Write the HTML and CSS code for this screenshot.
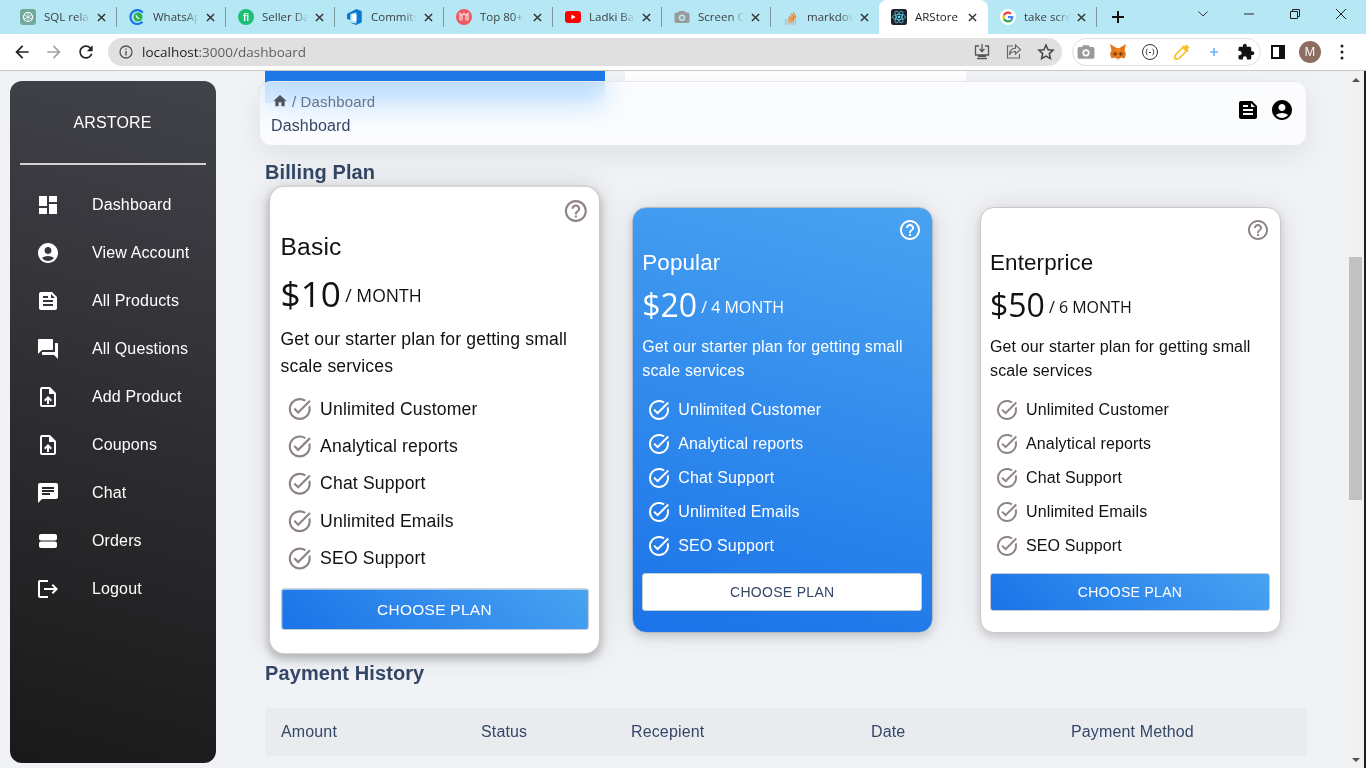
FILE: index.html
```html
<!DOCTYPE html>
<html lang="en">
<head>
<meta charset="utf-8">
<title>ARStore</title>
<link rel="stylesheet" href="styles.css">
</head>
<body>
<svg class="defs" aria-hidden="true">
  <symbol id="i-close" viewBox="0 0 10 10"><path d="M1 1l8 8M9 1L1 9" fill="none" stroke="currentColor" stroke-width="1.6"/></symbol>
  <symbol id="i-dashboard" viewBox="0 0 24 24"><path d="M3 13h8V3H3v10zm0 8h8v-6H3v6zm10 0h8V11h-8v10zm0-18v6h8V3h-8z"/></symbol>
  <symbol id="i-account" viewBox="0 0 24 24"><path d="M12 2C6.48 2 2 6.48 2 12s4.48 10 10 10 10-4.48 10-10S17.52 2 12 2zm0 4c1.93 0 3.5 1.57 3.5 3.5S13.93 13 12 13s-3.5-1.57-3.5-3.5S10.07 6 12 6zm0 14c-2.03 0-4.43-.82-6.14-2.88C7.55 15.8 9.68 15 12 15s4.45.8 6.14 2.12C16.43 19.18 14.03 20 12 20z"/></symbol>
  <symbol id="i-feed" viewBox="0 0 24 24"><path d="M16 3H5c-1.1 0-2 .9-2 2v14c0 1.1.9 2 2 2h14c1.1 0 2-.9 2-2V8l-5-5zM7 7h5v2H7V7zm10 10H7v-2h10v2zm0-4H7v-2h10v2zm-2-4V5l4 4h-4z"/></symbol>
  <symbol id="i-forum" viewBox="0 0 24 24"><path d="M21 6h-2v9H6v2c0 .55.45 1 1 1h11l4 4V7c0-.55-.45-1-1-1zm-4 6V3c0-.55-.45-1-1-1H3c-.55 0-1 .45-1 1v14l4-4h10c.55 0 1-.45 1-1z"/></symbol>
  <symbol id="i-upload" viewBox="0 0 24 24"><path d="M14 2H6c-1.1 0-1.99.9-1.99 2L4 20c0 1.1.89 2 1.99 2H18c1.1 0 2-.9 2-2V8l-6-6zm4 18H6V4h7v5h5v11zM8 15.01l1.41 1.41L11 14.84V19h2v-4.16l1.59 1.59L16 15.01 12.01 11 8 15.01z"/></symbol>
  <symbol id="i-chat" viewBox="0 0 24 24"><path d="M20 2H4c-1.1 0-1.99.9-1.99 2L2 22l4-4h14c1.1 0 2-.9 2-2V4c0-1.1-.9-2-2-2zM6 9h12v2H6V9zm8 5H6v-2h8v2zm4-6H6V6h12v2z"/></symbol>
  <symbol id="i-stream" viewBox="0 0 24 24"><path d="M3 17v-2.500c0-1.100.9-2 2-2h14c1.100 0 2 .9 2 2V17c0 1.100-.9 2-2 2H5c-1.100 0-2-.9-2-2zM3 7v2.500c0 1.100.9 2 2 2h14c1.100 0 2-.9 2-2V7c0-1.100-.9-2-2-2H5c-1.100 0-2 .9-2 2z"/></symbol>
  <symbol id="i-logout" viewBox="0 0 24 24"><path d="M17 7l-1.41 1.41L18.17 11H8v2h10.17l-2.58 2.58L17 17l5-5zM4 5h8V3H4c-1.1 0-2 .9-2 2v14c0 1.1.9 2 2 2h8v-2H4V5z"/></symbol>
  <symbol id="i-home" viewBox="0 0 24 24"><path d="M10 20v-6h4v6h5v-8h3L12 3 2 12h3v8z"/></symbol>
  <symbol id="i-help" viewBox="0 0 24 24"><path d="M11 18h2v-2h-2v2zm1-16C6.48 2 2 6.48 2 12s4.48 10 10 10 10-4.48 10-10S17.52 2 12 2zm0 18c-4.41 0-8-3.59-8-8s3.59-8 8-8 8 3.59 8 8-3.59 8-8 8zm0-14c-2.21 0-4 1.79-4 4h2c0-1.1.9-2 2-2s2 .9 2 2c0 2-3 1.75-3 5h2c0-2.25 3-2.5 3-5 0-2.21-1.79-4-4-4z"/></symbol>
  <symbol id="i-task" viewBox="0 0 24 24"><path d="M22 5.18L10.59 16.6l-4.24-4.24 1.41-1.41 2.83 2.83 10-10L22 5.18zm-2.21 5.04c.13.57.21 1.17.21 1.78 0 4.42-3.58 8-8 8s-8-3.58-8-8 3.58-8 8-8c1.58 0 3.04.46 4.28 1.21l1.44-1.44C16.1 2.67 14.13 2 12 2 6.48 2 2 6.48 2 12s4.48 10 10 10 10-4.48 10-10c0-1.19-.22-2.33-.6-3.39l-1.61 1.61z"/></symbol>
  <symbol id="i-camera" viewBox="0 0 16 16"><path d="M5.500 2L4.400 3.500H2A1.500 1.500 0 0 0 .5 5v7.500A1.500 1.500 0 0 0 2 14h12a1.500 1.500 0 0 0 1.500-1.500V5A1.500 1.500 0 0 0 14 3.500h-2.400L10.500 2zM8 5.500a3.200 3.200 0 1 1 0 6.400 3.200 3.200 0 0 1 0-6.400zM8 7a1.700 1.700 0 1 0 0 3.400A1.700 1.700 0 0 0 8 7z"/></symbol>
</svg>

<header class="browser">
  <div class="tabstrip">
    <div class="tab sep">
      <svg class="fav" viewBox="0 0 16 16"><rect width="16" height="16" rx="3" fill="#74aa9c"/><circle cx="8" cy="8" r="4.500" fill="none" stroke="#fff" stroke-width="1.200"/><path d="M8 3.500v9M4 5.700l8 4.600M12 5.700l-8 4.600" stroke="#fff" stroke-width=".7"/></svg>
      <span class="tab-title">SQL relation</span><svg class="tab-x"><use href="#i-close"/></svg>
    </div>
    <div class="tab sep">
      <svg class="fav" viewBox="0 0 16 16"><path d="M13.500 12.800A7 7 0 1 1 13.800 3.600" fill="none" stroke="#1a73e8" stroke-width="2.200"/><circle cx="9" cy="8" r="4.500" fill="#25b454"/><path d="M7.200 6.300c.2 2 1.200 3 3.200 3.400" fill="none" stroke="#fff" stroke-width="1.300"/></svg>
      <span class="tab-title">WhatsApp</span><svg class="tab-x"><use href="#i-close"/></svg>
    </div>
    <div class="tab sep">
      <svg class="fav" viewBox="0 0 16 16"><circle cx="8" cy="8" r="8" fill="#1dbf73"/><text x="8" y="11.500" class="fav-text">fi</text></svg>
      <span class="tab-title">Seller Dashboard</span><svg class="tab-x"><use href="#i-close"/></svg>
    </div>
    <div class="tab sep">
      <svg class="fav" viewBox="0 0 16 16"><path d="M0 5l2-1.200L9.500 0 14.500 2v11.500L9 16 3 13.500l6.500 1V3.500L3.500 5v6L0 10z" fill="#0b78d0"/><path d="M9.500 2.500L14.500 3v9.500l-5 1z" fill="#0b78d0"/><path d="M3.500 5l6-1.500v2L5.500 6.300v4.200l-2 .5z" fill="#fff" opacity=".25"/><rect x="5.500" y="5.600" width="4" height="6.500" fill="#fff"/></svg>
      <span class="tab-title">Commits - Azure</span><svg class="tab-x"><use href="#i-close"/></svg>
    </div>
    <div class="tab sep">
      <svg class="fav" viewBox="0 0 16 16"><circle cx="8" cy="8" r="8" fill="#ec5b62"/><path d="M4 11.500V4.500l2 2 2-2 2 2 2-2v7M6 6.500v5M10 6.500v5" fill="none" stroke="#fbd4d6" stroke-width="1.300"/></svg>
      <span class="tab-title">Top 80+ SQL</span><svg class="tab-x"><use href="#i-close"/></svg>
    </div>
    <div class="tab sep">
      <svg class="fav" viewBox="0 0 16 16"><rect y="2" width="16" height="12" rx="3.200" fill="#f00"/><path d="M6.400 5.600L10.600 8l-4.200 2.400z" fill="#fff"/></svg>
      <span class="tab-title">Ladki Badi</span><svg class="tab-x"><use href="#i-close"/></svg>
    </div>
    <div class="tab sep">
      <svg class="fav fav-gray"><use href="#i-camera"/></svg>
      <span class="tab-title">Screen Capture</span><svg class="tab-x"><use href="#i-close"/></svg>
    </div>
    <div class="tab tab-last">
      <svg class="fav" viewBox="0 0 16 16"><path d="M2.500 10v5h10v-5" fill="none" stroke="#bcbbbb" stroke-width="1.200"/><path d="M4.500 13h6.500M4.700 10.900l6.300.6M5.200 8.800l6.100 1.700M6.200 6.700l5.500 3M7.900 4.700l4.400 4.300M10 3l3.200 5.300" fill="none" stroke="#f48024" stroke-width="1.200"/></svg>
      <span class="tab-title">markdown</span><svg class="tab-x"><use href="#i-close"/></svg>
    </div>
    <div class="tab tab-active">
      <svg class="fav" viewBox="0 0 16 16"><rect width="16" height="16" rx="2.500" fill="#20232a"/><g fill="none" stroke="#61dafb" stroke-width=".7"><ellipse cx="8" cy="8" rx="6.500" ry="2.600"/><ellipse cx="8" cy="8" rx="6.500" ry="2.600" transform="rotate(60 8 8)"/><ellipse cx="8" cy="8" rx="6.500" ry="2.600" transform="rotate(120 8 8)"/></g><circle cx="8" cy="8" r="1.300" fill="#61dafb"/></svg>
      <span class="tab-title tab-title-full">ARStore</span><svg class="tab-x"><use href="#i-close"/></svg>
    </div>
    <div class="tab sep">
      <svg class="fav" viewBox="0 0 16 16"><circle cx="8" cy="8" r="8" fill="#fff"/><path d="M13.300 8.200c0-.4 0-.8-.1-1.200H8v2.200h3c-.1.700-.5 1.300-1.100 1.700l1.700 1.400c1.100-1 1.700-2.400 1.700-4.100z" fill="#4285f4"/><path d="M8 13.500c1.500 0 2.700-.5 3.600-1.300l-1.700-1.400c-.5.300-1.100.5-1.900.5-1.400 0-2.600-1-3.100-2.300L3.100 10.400c.9 1.800 2.800 3.100 4.900 3.100z" fill="#34a853"/><path d="M4.900 9c-.2-.7-.2-1.400 0-2.100L3.100 5.500c-.8 1.500-.8 3.400 0 4.900z" fill="#fbbc05"/><path d="M8 4.700c.8 0 1.500.3 2.100.8l1.500-1.500C10.700 3 9.400 2.500 8 2.500c-2.100 0-4 1.300-4.900 3l1.800 1.400C5.400 5.600 6.600 4.700 8 4.700z" fill="#ea4335"/></svg>
      <span class="tab-title">take screenshot</span><svg class="tab-x"><use href="#i-close"/></svg>
    </div>
    <div class="newtab"><svg viewBox="0 0 12 12" width="12" height="12"><path d="M6 0v12M0 6h12" stroke="#111" stroke-width="2"/></svg></div>
    <div class="winctrls">
      <div class="winctrl"><svg viewBox="0 0 10 6" width="10" height="6"><path d="M.5.500L5 5 9.500.500" fill="none" stroke="#333" stroke-width="1"/></svg></div>
      <div class="winctrl"><svg viewBox="0 0 10 2" width="10" height="2"><path d="M0 1h10" stroke="#222" stroke-width="1"/></svg></div>
      <div class="winctrl"><svg viewBox="0 0 10 10" width="10" height="10"><path d="M.5 2.500h7v7h-7zM2.500 2.500v-2h7v7h-2" fill="none" stroke="#222" stroke-width="1"/></svg></div>
      <div class="winctrl"><svg viewBox="0 0 10 10" width="10" height="10"><path d="M0 0l10 10M10 0L0 10" stroke="#222" stroke-width="1"/></svg></div>
    </div>
  </div>
  <div class="toolbar">
    <svg class="tool-btn" viewBox="0 0 24 24"><path d="M20 11H7.830l5.590-5.590L12 4l-8 8 8 8 1.410-1.410L7.830 13H20v-2z"/></svg>
    <svg class="tool-btn tool-dim" viewBox="0 0 24 24"><path d="M4 11h12.170l-5.590-5.590L12 4l8 8-8 8-1.410-1.410L16.170 13H4v-2z"/></svg>
    <svg class="tool-btn" viewBox="0 0 24 24"><path d="M17.650 6.350C16.200 4.900 14.210 4 12 4c-4.420 0-7.990 3.580-7.990 8s3.570 8 7.990 8c3.730 0 6.840-2.550 7.730-6h-2.080c-.82 2.330-3.040 4-5.650 4-3.310 0-6-2.690-6-6s2.690-6 6-6c1.660 0 3.140.69 4.220 1.780L13 11h7V4l-2.350 2.350z"/></svg>
    <div class="omnibox">
      <svg class="omni-info" viewBox="0 0 16 16"><circle cx="8" cy="8" r="6" fill="none" stroke="#555" stroke-width="1.300"/><path d="M8 7v4.500M8 4.500v1.300" stroke="#555" stroke-width="1.400"/></svg>
      <span class="url"><span class="url-host">localhost</span>:3000/dashboard</span>
      <div class="omni-actions">
        <svg viewBox="0 0 18 18" class="omni-ic"><path d="M6 3H2.500v9h13V3H12M9 1v7M6.500 6L9 8.500 11.500 6M4 15.500h10" fill="none" stroke="#555" stroke-width="1.300"/><path d="M5 12h8v2H5z" fill="#555"/></svg>
        <svg viewBox="0 0 18 18" class="omni-ic"><path d="M8 3H2.500v12h12v-4M10.500 2l5 4.500-5 4.500V8.500C7.500 8.500 5.500 9.500 4.500 12c0-4 2.500-6.500 6-6.800z" fill="none" stroke="#666" stroke-width="1.200"/></svg>
        <svg viewBox="0 0 18 18" class="omni-ic"><path d="M9 2l2.100 4.700 5 .5-3.800 3.400 1.100 5L9 13l-4.400 2.600 1.100-5L1.900 7.200l5-.5z" fill="none" stroke="#444" stroke-width="1.500"/></svg>
      </div>
    </div>
    <div class="extensions">
      <svg class="ext fav-gray"><use href="#i-camera"/></svg>
      <svg class="ext" viewBox="0 0 18 18"><path d="M1 1l6.500 4h3L17 1l-1.500 6 1.500 4-1.500 4.500-3.500-1-2 1.500h-2L6 14.500l-3.500 1L1 11l1.500-4z" fill="#e2761b"/><path d="M6 9l2 1.500L6.500 13 4 11zM12 9l-2 1.500 1.500 2.500L14 11z" fill="#763d16"/><path d="M8 15h2v1.500H8z" fill="#c0ad9e"/><path d="M7.500 5h3L12 8H6z" fill="#f6851b"/></svg>
      <svg class="ext" viewBox="0 0 18 18"><circle cx="9" cy="9" r="7.500" fill="none" stroke="#333" stroke-width="1"/><path d="M6.500 6C5 6 6 8.700 4.800 9 6 9.300 5 12 6.500 12M11.500 6c1.500 0 .5 2.700 1.700 3-1.200.3-.2 3-1.700 3M8 9.500h2" fill="none" stroke="#333" stroke-width="1"/></svg>
      <svg class="ext" viewBox="0 0 18 18"><path d="M2.500 16l-1-1 1-3L10 4.500l3.500 3.500L6 15.500z" fill="none" stroke="#fbbd23" stroke-width="1.700"/><path d="M9 3.500l1.500-1 1 1 2-2 3 3-2 2 1 1-1 1.500z" fill="#fbbd23"/></svg>
      <svg class="ext" viewBox="0 0 18 18"><path d="M9 5v8M5 9h8" stroke="#6fb2f7" stroke-width="1.600"/></svg>
      <svg class="ext" viewBox="0 0 24 24"><path d="M20.500 11H19V7c0-1.100-.9-2-2-2h-4V3.500C13 2.120 11.880 1 10.500 1S8 2.120 8 3.500V5H4c-1.100 0-1.990.9-1.990 2v3.800H3.500c1.490 0 2.700 1.210 2.700 2.700s-1.210 2.700-2.700 2.700H2V20c0 1.100.9 2 2 2h3.800v-1.500c0-1.490 1.210-2.700 2.700-2.700 1.490 0 2.700 1.210 2.700 2.700V22H17c1.100 0 2-.9 2-2v-4h1.500c1.380 0 2.500-1.120 2.500-2.500S21.880 11 20.500 11z" fill="#111"/></svg>
    </div>
    <svg class="side-panel" viewBox="0 0 14 14"><path d="M1 1h12v12H1z" fill="none" stroke="#111" stroke-width="2"/><path d="M8 1h5v12H8z" fill="#111"/></svg>
    <div class="avatar">M</div>
    <svg class="kebab" viewBox="0 0 4 16"><circle cx="2" cy="2" r="1.500"/><circle cx="2" cy="8" r="1.500"/><circle cx="2" cy="14" r="1.500"/></svg>
  </div>
</header>

<div class="page">
  <aside class="sidebar">
    <div class="brand">ARSTORE</div>
    <hr class="brand-rule">
    <nav class="nav">
      <a class="nav-item"><svg class="nav-ic"><use href="#i-dashboard"/></svg><span>Dashboard</span></a>
      <a class="nav-item"><svg class="nav-ic"><use href="#i-account"/></svg><span>View Account</span></a>
      <a class="nav-item"><svg class="nav-ic"><use href="#i-feed"/></svg><span>All Products</span></a>
      <a class="nav-item"><svg class="nav-ic"><use href="#i-forum"/></svg><span>All Questions</span></a>
      <a class="nav-item"><svg class="nav-ic"><use href="#i-upload"/></svg><span>Add Product</span></a>
      <a class="nav-item"><svg class="nav-ic"><use href="#i-upload"/></svg><span>Coupons</span></a>
      <a class="nav-item"><svg class="nav-ic"><use href="#i-chat"/></svg><span>Chat</span></a>
      <a class="nav-item"><svg class="nav-ic"><use href="#i-stream"/></svg><span>Orders</span></a>
      <a class="nav-item"><svg class="nav-ic"><use href="#i-logout"/></svg><span>Logout</span></a>
    </nav>
  </aside>

  <main class="main">
    <div class="peek peek-blue"></div>
    <div class="peek peek-white"></div>
    <div class="topbar">
      <div class="crumbs">
        <div class="crumb-line"><svg class="crumb-home"><use href="#i-home"/></svg><span>/ Dashboard</span></div>
        <div class="crumb-title">Dashboard</div>
      </div>
      <div class="top-actions">
        <svg class="top-ic"><use href="#i-feed"/></svg>
        <svg class="top-ic"><use href="#i-account"/></svg>
      </div>
    </div>

    <h2 class="section billing-title">Billing Plan</h2>

    <div class="plans">
      <article class="plan plan-big">
        <svg class="help"><use href="#i-help"/></svg>
        <h3 class="plan-name">Basic</h3>
        <div class="plan-price"><span class="amount">$10</span><span class="per">/ MONTH</span></div>
        <p class="plan-desc">Get our starter plan for getting small scale services</p>
        <ul class="features">
          <li><svg class="tick"><use href="#i-task"/></svg>Unlimited Customer</li>
          <li><svg class="tick"><use href="#i-task"/></svg>Analytical reports</li>
          <li><svg class="tick"><use href="#i-task"/></svg>Chat Support</li>
          <li><svg class="tick"><use href="#i-task"/></svg>Unlimited Emails</li>
          <li><svg class="tick"><use href="#i-task"/></svg>SEO Support</li>
        </ul>
        <button class="choose">CHOOSE PLAN</button>
      </article>
      <article class="plan plan-blue">
        <svg class="help"><use href="#i-help"/></svg>
        <h3 class="plan-name">Popular</h3>
        <div class="plan-price"><span class="amount">$20</span><span class="per">/ 4 MONTH</span></div>
        <p class="plan-desc">Get our starter plan for getting small scale services</p>
        <ul class="features">
          <li><svg class="tick"><use href="#i-task"/></svg>Unlimited Customer</li>
          <li><svg class="tick"><use href="#i-task"/></svg>Analytical reports</li>
          <li><svg class="tick"><use href="#i-task"/></svg>Chat Support</li>
          <li><svg class="tick"><use href="#i-task"/></svg>Unlimited Emails</li>
          <li><svg class="tick"><use href="#i-task"/></svg>SEO Support</li>
        </ul>
        <button class="choose">CHOOSE PLAN</button>
      </article>
      <article class="plan">
        <svg class="help"><use href="#i-help"/></svg>
        <h3 class="plan-name">Enterprice</h3>
        <div class="plan-price"><span class="amount">$50</span><span class="per">/ 6 MONTH</span></div>
        <p class="plan-desc">Get our starter plan for getting small scale services</p>
        <ul class="features">
          <li><svg class="tick"><use href="#i-task"/></svg>Unlimited Customer</li>
          <li><svg class="tick"><use href="#i-task"/></svg>Analytical reports</li>
          <li><svg class="tick"><use href="#i-task"/></svg>Chat Support</li>
          <li><svg class="tick"><use href="#i-task"/></svg>Unlimited Emails</li>
          <li><svg class="tick"><use href="#i-task"/></svg>SEO Support</li>
        </ul>
        <button class="choose">CHOOSE PLAN</button>
      </article>
    </div>

    <h2 class="section history-title">Payment History</h2>

    <div class="history-head">
      <div class="col-amount">Amount</div>
      <div class="col-status">Status</div>
      <div class="col-recipient">Recepient</div>
      <div class="col-date">Date</div>
      <div class="col-method">Payment Method</div>
    </div>
  </main>

  <div class="scrollbar">
    <div class="arrow-up"></div>
    <div class="thumb"></div>
    <div class="arrow-down"></div>
  </div>
</div>
</body>
</html>
```

FILE: styles.css
```css
* { box-sizing: border-box; }

html, body {
  margin: 0;
  height: 100%;
  overflow: hidden;
}

body {
  width: 1366px;
  height: 768px;
  display: flex;
  flex-direction: column;
  font-family: "Liberation Sans", Arial, sans-serif;
  letter-spacing: .14px;
  background: #f0f2f5;
}

.defs { display: none; }

/* Browser chrome */
.browser {
  flex: none;
  height: 71px;
  background: #fff;
  border-bottom: 1px solid #c8c8c8;
  font-family: "Open Sans", sans-serif;
  letter-spacing: 0;
}

.tabstrip {
  height: 34px;
  display: flex;
  padding-left: 8px;
  background: #b5e7f4;
}

.tab {
  flex: none;
  width: 109px;
  height: 34px;
  display: flex;
  align-items: center;
  padding-left: 12px;
  position: relative;
  color: #3c4043;
  font-size: 11.500px;
}

.tab.sep::after {
  content: "";
  position: absolute;
  right: 0;
  top: 7px;
  height: 20px;
  width: 1px;
  background: #7d979f;
}

.tab-last { width: 108px; }

.tab-active {
  background: #fff;
  border-radius: 8px 8px 0 0;
  color: #222;
}

.fav {
  flex: none;
  width: 16px;
  height: 16px;
  margin-right: 8px;
}

.fav-gray { fill: #9a9a9a; }

.fav-text {
  font: bold 10px "Liberation Sans", sans-serif;
  fill: #fff;
  text-anchor: middle;
}

.tab-title {
  flex: none;
  width: 46px;
  margin-top: -2px;
  overflow: hidden;
  white-space: nowrap;
  -webkit-mask-image: linear-gradient(to right, #000 70%, transparent 100%);
  mask-image: linear-gradient(to right, #000 70%, transparent 100%);
}

.tab-title-full {
  -webkit-mask-image: none;
  mask-image: none;
}

.tab-x {
  flex: none;
  width: 9px;
  height: 9px;
  margin-left: 7px;
  color: #333;
}

.newtab {
  flex: none;
  width: 42px;
  display: flex;
  align-items: center;
  justify-content: center;
}

.winctrls {
  margin-left: auto;
  display: flex;
  padding-right: 2px;
}

.winctrl {
  width: 46px;
  height: 28px;
  display: flex;
  align-items: center;
  justify-content: center;
}

.toolbar {
  height: 36px;
  display: flex;
  align-items: center;
  padding-left: 12px;
}

.tool-btn {
  flex: none;
  width: 20px;
  height: 20px;
  margin-right: 12px;
  fill: #222;
}

.tool-dim { fill: #a2a2a2; }

.omnibox {
  flex: none;
  width: 954px;
  height: 28px;
  display: flex;
  align-items: center;
  padding-left: 10px;
  background: #e0e0e0;
  border-radius: 14px;
}

.omni-info {
  flex: none;
  width: 16px;
  height: 16px;
  margin-right: 8px;
}

.url {
  font-size: 13.500px;
  color: #5f5f5f;
}

.url-host { color: #222; }

.omni-actions {
  margin-left: auto;
  display: flex;
  gap: 14px;
  padding-right: 7px;
}

.omni-ic {
  width: 18px;
  height: 18px;
}

.extensions {
  flex: none;
  width: 189px;
  height: 28px;
  margin-left: 10px;
  display: flex;
  align-items: center;
  gap: 14px;
  padding-left: 4px;
  border: 1px solid #e0e0e0;
  border-radius: 14px;
}

.ext {
  flex: none;
  width: 18px;
  height: 18px;
}

.side-panel {
  flex: none;
  width: 14px;
  height: 14px;
  margin-left: 10px;
}

.avatar {
  flex: none;
  width: 22px;
  height: 22px;
  margin-left: 14px;
  border-radius: 50%;
  background: #8d6e63;
  color: #fff;
  font-size: 12px;
  line-height: 22px;
  text-align: center;
}

.kebab {
  flex: none;
  width: 4px;
  height: 16px;
  margin-left: 19px;
  fill: #222;
}

/* Page */
.page {
  flex: 1;
  min-height: 0;
  display: flex;
  overflow: hidden;
}

.sidebar {
  flex: none;
  width: 206px;
  height: 682px;
  margin: 10px 0 0 10px;
  border-radius: 12px;
  color: #fff;
  background: linear-gradient(195deg, #42424a, #191919);
}

.brand {
  height: 82px;
  display: flex;
  align-items: center;
  justify-content: center;
  font-size: 16px;
  padding-top: 2px;
  padding-right: 1px;
}

.brand-rule {
  width: 186px;
  height: 2px;
  margin: 0 auto;
  border: 0;
  background: #d2d2d4;
}

.nav {
  margin-top: 16px;
}

.nav-item {
  height: 48px;
  display: flex;
  align-items: center;
  gap: 32px;
  padding-left: 26px;
  font-size: 16px;
  color: #fff;
}

.nav-ic {
  flex: none;
  width: 24px;
  height: 24px;
  fill: #fff;
}

.main {
  flex: none;
  width: 1048px;
  margin-left: 43px;
  position: relative;
}

.peek {
  position: absolute;
  top: 0;
  height: 11px;
}

.peek-blue {
  left: 6px;
  width: 340px;
  height: 32px;
  background: #1f7ae9;
}

.peek-white {
  left: 366px;
  width: 341px;
  background: #fff;
}

.topbar {
  position: relative;
  z-index: 2;
  height: 65px;
  margin-top: 10px;
  display: flex;
  align-items: center;
  justify-content: space-between;
  padding: 0 12px 0 11px;
  border: 1px solid #e6e8ed;
  border-radius: 12px;
  background: rgba(255, 255, 255, .72);
  -webkit-backdrop-filter: saturate(200%) blur(14px);
  backdrop-filter: saturate(200%) blur(14px);
  box-shadow: 0 10px 30px rgba(0, 0, 0, .07);
}

.crumbs { color: #344767; }

.crumb-line {
  display: flex;
  align-items: center;
  gap: 4px;
  height: 24px;
  color: #67748e;
  font-size: 15px;
}

.crumb-home {
  width: 16px;
  height: 16px;
  fill: #4f5560;
  margin-left: 1px;
}

.crumb-title {
  height: 24px;
  margin-top: 1px;
  line-height: 24px;
  font-size: 16px;
  color: #344767;
}

.top-actions {
  display: flex;
  gap: 10px;
  margin-bottom: 8px;
}

.top-ic {
  width: 24px;
  height: 24px;
  fill: #000;
}

.section {
  margin: 0 0 0 6px;
  height: 24px;
  line-height: 24px;
  font-size: 20px;
  font-weight: 700;
  letter-spacing: .1px;
  color: #344767;
}

.billing-title { margin-top: 14px; }

.plans {
  display: flex;
  gap: 46.750px;
  margin: 23px 0 0 25px;
}

.plan {
  flex: none;
  width: 301px;
  height: 426px;
  padding: 10px 9.500px;
  display: flex;
  flex-direction: column;
  border: 1px solid #cfc6c6;
  border-radius: 14px;
  background: #fff;
  color: #111;
  box-shadow: 0 4px 8px rgba(0, 0, 0, .14), 0 0 30px rgba(0, 0, 0, .09);
}

.plan-big {
  transform: scale(1.1);
  position: relative;
  z-index: 1;
  box-shadow: 0 4px 8px rgba(0, 0, 0, .22), 0 0 24px rgba(0, 0, 0, .12);
}

.plan-blue {
  border-color: #b5b9c0;
  color: #fff;
  background: linear-gradient(195deg, #49a3f1, #1a73e8);
}

.help {
  flex: none;
  align-self: flex-end;
  width: 24px;
  height: 24px;
  fill: #8f8484;
}

.plan-blue .help { fill: #fff; }

.plan-name {
  margin: 6px 0 0;
  height: 30px;
  line-height: 30px;
  font-size: 22.400px;
  font-weight: 400;
}

.plan-price {
  display: flex;
  align-items: center;
  gap: 4px;
  height: 44px;
  margin-top: 4px;
  font-family: "Open Sans", sans-serif;
  letter-spacing: 0;
}

.amount {
  font-size: 32px;
}

.per {
  font-size: 16px;
  padding-top: 5px;
}

.plan-desc {
  margin: 9px 0 0;
  font-size: 16px;
  line-height: 24px;
}

.features {
  list-style: none;
  margin: 10px 0 0;
  padding: 0 0 0 5px;
}

.features li {
  height: 34px;
  display: flex;
  align-items: center;
  gap: 7px;
  font-size: 16px;
}

.tick {
  flex: none;
  width: 24px;
  height: 24px;
  fill: #8f8484;
}

.plan-blue .tick { fill: #fff; }

.choose {
  flex: none;
  height: 38px;
  margin-top: 10px;
  border: 1px solid #c4cbd6;
  border-radius: 3px;
  font-family: "Liberation Sans", sans-serif;
  font-size: 14px;
  letter-spacing: .3px;
  color: #fff;
  background: linear-gradient(40deg, #1a73e8, #49a3f1);
}

.plan-blue .choose {
  background: #fff;
  color: #344767;
}

.history-title { margin-top: 28px; }

.history-head {
  margin: 23px 0 0 6px;
  height: 48px;
  display: flex;
  align-items: center;
  padding-left: 16px;
  border-radius: 4px;
  background: #e9ebef;
  font-size: 16px;
  color: #344767;
}

.col-amount { width: 200px; }
.col-status { width: 150px; }
.col-recipient { width: 240px; }
.col-date { width: 200px; }

.scrollbar {
  flex: none;
  width: 18px;
  margin-left: 41px;
  background: #f1f1f1;
  border-right: 2px solid #202124;
  position: relative;
  display: flex;
  flex-direction: column;
  align-items: center;
}

.thumb {
  position: absolute;
  top: 186px;
  left: 1px;
  width: 13px;
  height: 243px;
  background: #c1c1c1;
}

.arrow-up {
  margin-top: 7px;
  width: 0;
  height: 0;
  border-left: 4px solid transparent;
  border-right: 4px solid transparent;
  border-bottom: 4px solid #505050;
}

.arrow-down {
  margin-top: auto;
  margin-bottom: 6px;
  width: 0;
  height: 0;
  border-left: 4px solid transparent;
  border-right: 4px solid transparent;
  border-top: 4px solid #505050;
}
```
